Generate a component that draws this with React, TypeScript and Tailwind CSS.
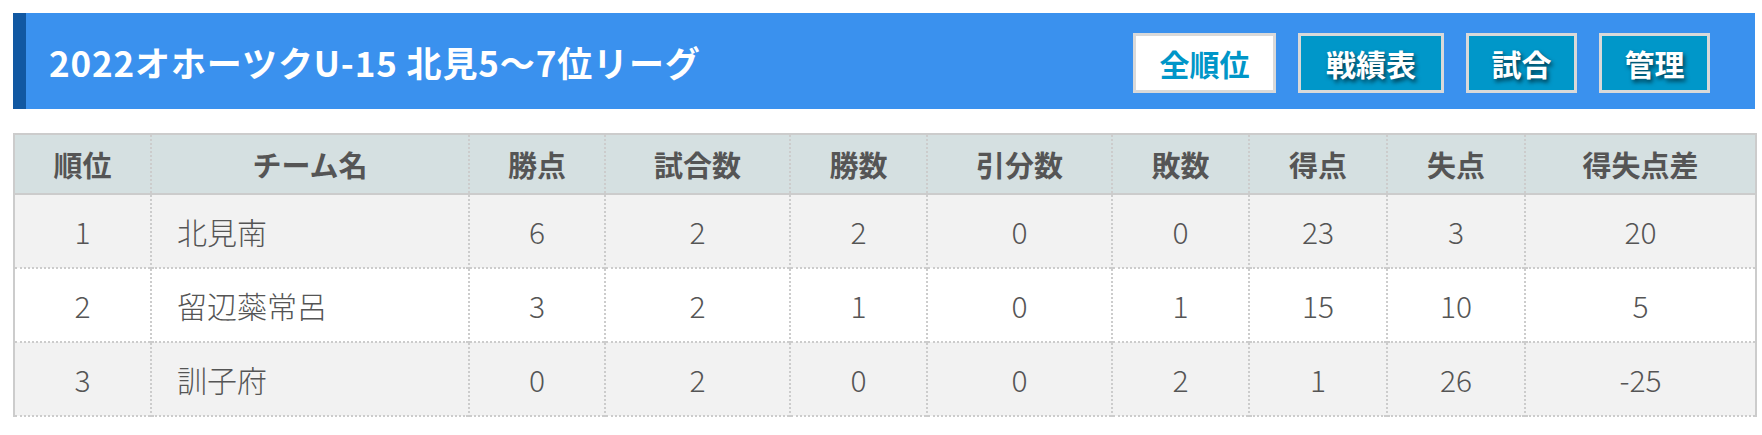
const COLUMNS = [
  { label: '順位', width: 'w-[137px]' },
  { label: 'チーム名', width: 'w-[318px]' },
  { label: '勝点', width: 'w-[136px]' },
  { label: '試合数', width: 'w-[185px]' },
  { label: '勝数', width: 'w-[137px]' },
  { label: '引分数', width: 'w-[185px]' },
  { label: '敗数', width: 'w-[137px]' },
  { label: '得点', width: 'w-[138px]' },
  { label: '失点', width: 'w-[138px]' },
  { label: '得失点差', width: 'w-[231px]' },
]

const ROWS = [
  { rank: 1, team: '北見南', stats: [6, 2, 2, 0, 0, 23, 3, 20] },
  { rank: 2, team: '留辺蘂常呂', stats: [3, 2, 1, 0, 1, 15, 10, 5] },
  { rank: 3, team: '訓子府', stats: [0, 2, 0, 0, 2, 1, 26, -25] },
]

const NAV = [
  { label: '全順位', width: 'w-[143px]', active: true },
  { label: '戦績表', width: 'w-[146px]', active: false },
  { label: '試合', width: 'w-[111px]', active: false },
  { label: '管理', width: 'w-[111px]', active: false },
]

export default function App() {
  return (
    <div className="bg-white min-h-[435px] pt-[13px] pl-[13px] font-['Noto_Sans_CJK_JP','Noto_Sans',sans-serif]">
      <div className="w-[1742px]">
        <header className="flex items-center h-[96px] bg-[#3a91ee] border-l-[13px] border-[#1158a2] pl-[23px] pr-[45px]">
          <h1 className="text-white font-bold text-[35px] leading-none tracking-[0.025em]">
            2022オホーツクU-15 北見5〜7位リーグ
          </h1>
          <nav className="ml-auto flex gap-[22px] mt-[4px]">
            {NAV.map((item) => (
              <a
                key={item.label}
                className={`${item.width} h-[60px] flex items-center justify-center border-[3px] border-[#d9d9d9] text-[30px] font-bold leading-none ${
                  item.active
                    ? 'bg-white text-[#0096c8]'
                    : 'bg-[#0097c9] text-white [text-shadow:2px_3px_4px_rgba(0,0,0,0.6)]'
                }`}
              >
                {item.label}
              </a>
            ))}
          </nav>
        </header>

        <table className="mt-[24px] w-full table-fixed border-collapse border-x-2 border-t-2 border-[#cccccc] text-[#555555]">
          <colgroup>
            {COLUMNS.map((c) => (
              <col key={c.label} className={c.width} />
            ))}
          </colgroup>
          <thead>
            <tr className="h-[60px] bg-[#d5e0e1] border-b-2 border-solid border-[#cccccc]">
              {COLUMNS.map((c, i) => (
                <th
                  key={c.label}
                  className={`text-[29px] font-bold text-center leading-none ${
                    i > 0 ? 'border-l-2 border-dotted border-[#cccccc]' : ''
                  }`}
                >
                  {c.label}
                </th>
              ))}
            </tr>
          </thead>
          <tbody className="font-light">
            {ROWS.map((row, r) => (
              <tr
                key={row.rank}
                className={`h-[74px] border-b-2 border-dotted border-[#cccccc] ${
                  r % 2 === 0 ? 'bg-[#f2f2f2]' : 'bg-white'
                }`}
              >
                <td className="text-center text-[30px]">{row.rank}</td>
                <td className="pl-[25px] text-[30px] border-l-2 border-dotted border-[#cccccc]">
                  {row.team}
                </td>
                {row.stats.map((v, i) => (
                  <td
                    key={i}
                    className="text-center text-[30px] border-l-2 border-dotted border-[#cccccc]"
                  >
                    {v}
                  </td>
                ))}
              </tr>
            ))}
          </tbody>
        </table>
      </div>
    </div>
  )
}
